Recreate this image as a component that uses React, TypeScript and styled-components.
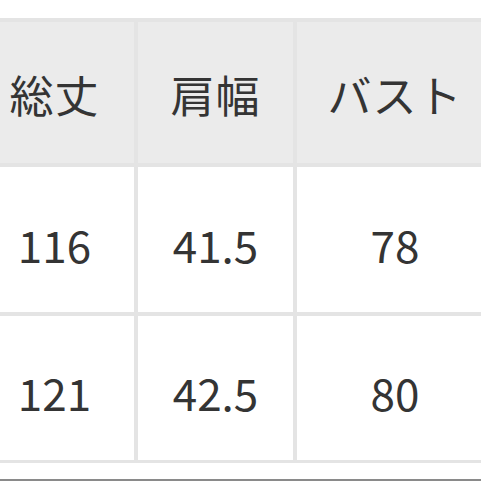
import styled, { createGlobalStyle } from 'styled-components'

const GlobalStyle = createGlobalStyle`
  html, body {
    margin: 0;
    padding: 0;
    background: #FFFFFF;
    overflow: hidden;
  }
  body {
    font-family: "Noto Sans CJK JP", "Noto Sans", sans-serif;
  }
`

const StyledPage = styled.div`
  width: 481px;
  height: 481px;
  overflow: hidden;
  padding-top: 18px;
  box-sizing: border-box;
  border-bottom: 2px solid #8a8a8a;
`
const StyledTable = styled.div`
  display: grid;
  grid-template-columns: 159px 155px 196px;
  grid-template-rows: 141px 145px 144px;
  gap: 4px;
  padding: 4px 0 3px;
  margin-left: -25px;
  width: 518px;
  background-color: #e4e4e4;
`
const StyledCell = styled.div<{ $head?: boolean }>`
  display: flex;
  align-items: center;
  justify-content: center;
  background-color: ${({ $head }) => ($head ? '#ebebeb' : '#FFFFFF')};
  color: #343434;
  font-size: 44px;
  font-weight: 400;
  letter-spacing: ${({ $head }) => ($head ? '1px' : '0')};
  padding-top: ${({ $head }) => ($head ? '2px' : '8px')};
  box-sizing: border-box;
`

const headers = ['総丈', '肩幅', 'バスト']
const rows = [
  ['116', '41.5', '78'],
  ['121', '42.5', '80'],
]

function App() {
  return (
    <>
      <GlobalStyle />
      <StyledPage>
        <StyledTable>
          {headers.map((h) => (
            <StyledCell $head key={h}>{h}</StyledCell>
          ))}
          {rows.map((row, i) =>
            row.map((v, j) => <StyledCell key={`${i}-${j}`}>{v}</StyledCell>),
          )}
        </StyledTable>
      </StyledPage>
    </>
  )
}

export default App
